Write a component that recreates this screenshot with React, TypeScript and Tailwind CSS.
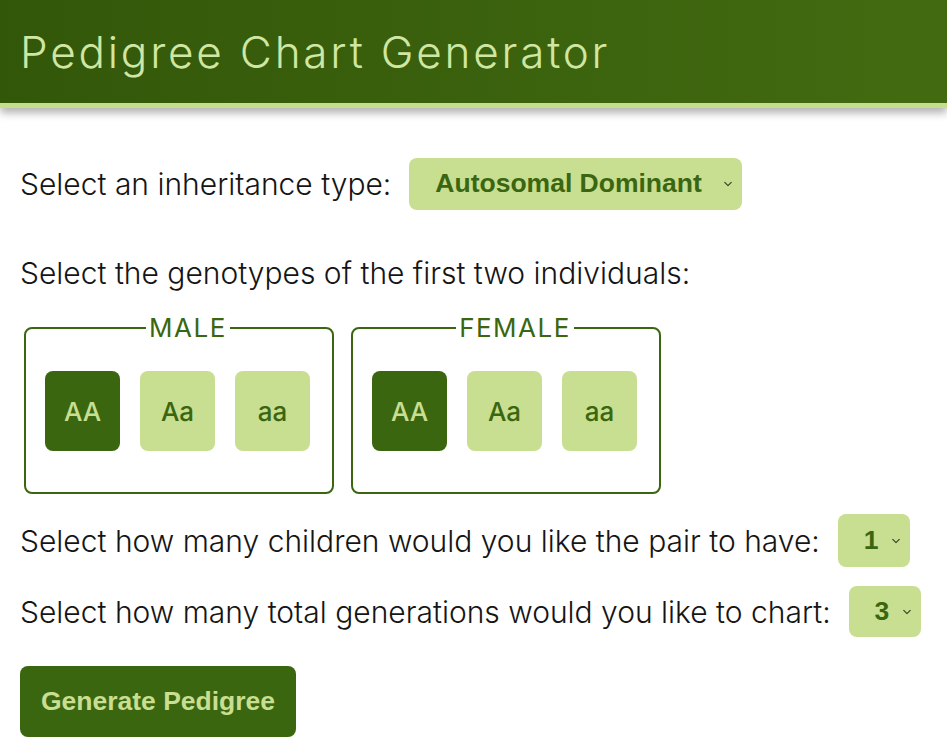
import { useState } from "react";

type Genotype = "AA" | "Aa" | "aa";

const genotypes: Genotype[] = ["AA", "Aa", "aa"];

function Chevron() {
  return (
    <svg
      viewBox="0 0 10 6"
      className="pointer-events-none absolute right-[10px] top-1/2 h-[5px] w-[8px] -translate-y-1/2"
      fill="none"
      stroke="#3b4a2a"
      strokeWidth={1.6}
      strokeLinecap="round"
      strokeLinejoin="round"
    >
      <path d="M1 1l4 4 4-4" />
    </svg>
  );
}

function GenotypeBox({
  label,
  value,
  onChange,
}: {
  label: string;
  value: Genotype;
  onChange: (g: Genotype) => void;
}) {
  return (
    <fieldset className="ml-1 w-[310px] rounded-lg border-2 border-[#3b6610] pl-[28px] pr-[10px] pt-[29px] pb-[41px]">
      <legend className="mx-auto px-[3px] text-[26px] font-normal leading-[28px] tracking-[1.5px] text-[#3b6610]">
        {label}
      </legend>
      <div className="-ml-[9px] flex gap-5">
        {genotypes.map((g) => (
          <button
            key={g}
            onClick={() => onChange(g)}
            className={
              value === g
                ? "h-20 w-[75px] rounded-lg bg-[#3b6610] text-[26px] font-medium text-[#c8de90]"
                : "h-20 w-[75px] rounded-lg bg-[#c8de90] text-[26px] font-medium text-[#3b6610]"
            }
          >
            {g}
          </button>
        ))}
      </div>
    </fieldset>
  );
}

export default function App() {
  const [inheritance, setInheritance] = useState("ad");
  const [male, setMale] = useState<Genotype>("AA");
  const [female, setFemale] = useState<Genotype>("AA");
  const [children, setChildren] = useState("1");
  const [generations, setGenerations] = useState("3");

  return (
    <div className="min-h-screen bg-white font-['Inter',sans-serif] font-light text-[#151515]">
      <header className="flex h-[108px] items-center border-b-[5px] border-[#c6de8c] bg-gradient-to-r from-[#335709] to-[#426b11] px-5 shadow-[0_5px_8px_rgba(0,0,0,0.3)]">
        <h1 className="text-[44px] font-light tracking-[2.8px] text-[#cfe7a3]">Pedigree Chart Generator</h1>
      </header>

      <main className="px-5">
        <div className="mt-[50px] flex items-center gap-[18px]">
          <label htmlFor="inheritance" className="text-[30px] leading-[36px]">
            Select an inheritance type:
          </label>
          <div className="relative">
            <select
              id="inheritance"
              value={inheritance}
              onChange={(e) => setInheritance(e.target.value)}
              className="h-[52px] w-[333px] appearance-none rounded-lg bg-[#c8de90] pl-[26px] font-['Liberation_Sans',sans-serif] text-[26.5px] font-bold text-[#3b6610] outline-none"
            >
              <option value="ad">Autosomal Dominant</option>
              <option value="ar">Autosomal Recessive</option>
              <option value="xd">X-Linked Dominant</option>
              <option value="xr">X-Linked Recessive</option>
            </select>
            <Chevron />
          </div>
        </div>

        <p className="mt-[45px] text-[30px] leading-[36px]">Select the genotypes of the first two individuals:</p>

        <div className="mt-[23px] flex gap-[13px]">
          <GenotypeBox label="MALE" value={male} onChange={setMale} />
          <GenotypeBox label="FEMALE" value={female} onChange={setFemale} />
        </div>

        <div className="mt-[20px] flex items-center gap-[18px]">
          <label htmlFor="children" className="text-[30px] leading-[36px]">
            Select how many children would you like the pair to have:
          </label>
          <div className="relative">
            <select
              id="children"
              value={children}
              onChange={(e) => setChildren(e.target.value)}
              className="h-[53px] w-[72px] appearance-none rounded-lg bg-[#c8de90] pl-[26px] font-['Liberation_Sans',sans-serif] text-[26.5px] font-bold text-[#3b6610] outline-none"
            >
              <option>1</option>
              <option>2</option>
              <option>3</option>
              <option>4</option>
            </select>
            <Chevron />
          </div>
        </div>

        <div className="mt-[19px] flex items-center gap-[18px]">
          <label htmlFor="generations" className="text-[30px] leading-[36px]">
            Select how many total generations would you like to chart:
          </label>
          <div className="relative">
            <select
              id="generations"
              value={generations}
              onChange={(e) => setGenerations(e.target.value)}
              className="h-[51px] w-[72px] appearance-none rounded-lg bg-[#c8de90] pl-[26px] font-['Liberation_Sans',sans-serif] text-[26.5px] font-bold text-[#3b6610] outline-none"
            >
              <option>2</option>
              <option>3</option>
              <option>4</option>
            </select>
            <Chevron />
          </div>
        </div>

        <button className="mt-[29px] h-[71px] w-[276px] rounded-lg bg-[#3b6610] font-['Liberation_Sans',sans-serif] text-[26.5px] font-bold text-[#c8de90]">
          Generate Pedigree
        </button>
      </main>
    </div>
  );
}
